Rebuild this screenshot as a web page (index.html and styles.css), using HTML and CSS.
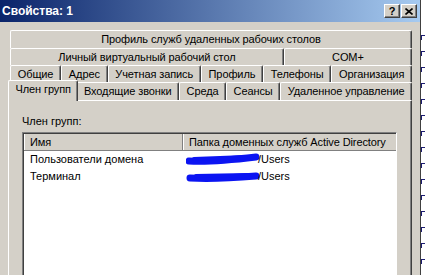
FILE: index.html
```html
<!DOCTYPE html>
<html lang="ru">
<head>
  <meta charset="UTF-8">
  <title>Свойства: 1</title>
  <link rel="stylesheet" href="styles.css">
</head>
<body>
<div class="window">
  <div class="titlebar">
    <span class="title">Свойства: 1</span>
    <div class="caption-buttons">
      <span class="cbtn help">?</span>
      <span class="cbtn close">
        <svg width="8" height="7" viewBox="0 0 8 7"><path d="M0.5 0.5 L7.5 6.5 M7.5 0.5 L0.5 6.5" stroke="#000" stroke-width="1.6"/></svg>
      </span>
    </div>
  </div>

  <div class="content">
    <div class="tabrow tall">
      <div class="tab">Профиль служб удаленных рабочих столов</div>
    </div>
    <div class="tabrow">
      <div class="tab">Личный виртуальный рабочий стол</div>
      <div class="tab wide">COM+</div>
    </div>
    <div class="tabrow">
      <div class="tab">Общие</div>
      <div class="tab">Адрес</div>
      <div class="tab">Учетная запись</div>
      <div class="tab">Профиль</div>
      <div class="tab">Телефоны</div>
      <div class="tab">Организация</div>
    </div>
    <div class="tabrow tall front">
      <div class="tab active">Член групп</div>
      <div class="tab">Входящие звонки</div>
      <div class="tab">Среда</div>
      <div class="tab">Сеансы</div>
      <div class="tab">Удаленное управление</div>
    </div>

    <div class="panel">
      <div class="label">Член групп:</div>
      <div class="listview">
        <div class="lv-head">
          <div class="col name">Имя</div>
          <div class="col folder">Папка доменных служб Active Directory</div>
        </div>
        <div class="lv-row">
          <div class="col name">Пользователи домена</div>
          <div class="col folder">
            <svg class="scribble" width="74" height="17" viewBox="0 0 74 17"><path d="M3 10 C20 11 45 9 70 6" stroke="#0b14f2" stroke-width="7" stroke-linecap="round" fill="none"/><path d="M8 8 L60 6" stroke="#0b14f2" stroke-width="4" stroke-linecap="round"/></svg>/Users
          </div>
        </div>
        <div class="lv-row">
          <div class="col name">Терминал</div>
          <div class="col folder">
            <svg class="scribble" width="74" height="17" viewBox="0 0 74 17"><path d="M4 10 C22 11 46 10 70 8" stroke="#0b14f2" stroke-width="7" stroke-linecap="round" fill="none"/><path d="M10 8 L62 7" stroke="#0b14f2" stroke-width="4" stroke-linecap="round"/></svg>/Users
          </div>
        </div>
      </div>
    </div>
  </div>
</div>

<div class="strip">
  <span class="mark"></span><span class="mark"></span><span class="mark"></span>
  <span class="mark"></span><span class="mark"></span><span class="mark"></span>
  <span class="mark"></span><span class="mark"></span><span class="mark"></span>
  <span class="mark"></span><span class="mark"></span><span class="mark"></span>
  <span class="mark"></span><span class="mark"></span><span class="mark"></span>
</div>
</body>
</html>
```

FILE: styles.css
```css
body {
  margin: 0;
  width: 425px;
  height: 275px;
  overflow: hidden;
  display: flex;
  font-family: "Liberation Sans", Arial, sans-serif;
  font-size: 11px;
  color: #000;
  background: #fff;
}

.window {
  width: 420px;
  height: 275px;
  background: #d4d0c8;
  border-right: 1px solid #404040;
  overflow: hidden;
  flex-shrink: 0;
}

/* Titelleiste */
.titlebar {
  height: 22px;
  display: flex;
  align-items: center;
  justify-content: space-between;
  background: linear-gradient(to right, #0a246a, #a6caf0);
}
.title {
  color: #fff;
  font-weight: bold;
  font-size: 12px;
  padding-left: 2px;
}
.caption-buttons {
  display: flex;
  gap: 1px;
  padding-right: 3px;
}
.cbtn {
  width: 14px;
  height: 12px;
  background: #d4d0c8;
  border: 1px solid;
  border-color: #fff #404040 #404040 #fff;
  box-shadow: inset -1px -1px 0 #808080;
  display: flex;
  align-items: center;
  justify-content: center;
  font-weight: bold;
  font-size: 11px;
  line-height: 12px;
}

/* Registerkarten */
.content {
  padding: 8px 8px 0 10px;
}
.tabrow {
  height: 17px;
  display: flex;
}
.tabrow.tall {
  height: 18px;
}
.tabrow.front {
  position: relative;
  z-index: 2;
}
.tab {
  flex: 1 1 auto;
  text-align: center;
  white-space: nowrap;
  line-height: 16px;
  letter-spacing: -0.1px;
  background: #d4d0c8;
  border-top: 1px solid #fff;
  border-left: 1px solid #fff;
  border-right: 1px solid #404040;
  box-shadow: inset -1px 0 0 #808080;
  border-radius: 2px 2px 0 0;
}
.tabrow.tall .tab {
  line-height: 17px;
}
.tab.active {
  position: relative;
  z-index: 3;
  margin: -2px -2px -1px -2px;
  padding-bottom: 3px;
  line-height: 16px;
}

.panel {
  margin-left: -2px;
  height: 190px;
  border-top: 1px solid #fff;
  border-left: 1px solid #fff;
  border-right: 1px solid #404040;
  box-shadow: inset -1px 0 0 #808080;
}
.label {
  margin: 13px 0 0 13px;
  line-height: 14px;
}

/* Listenansicht */
.listview {
  margin: 4px 0 0 13px;
  width: 372px;
  height: 160px;
  background: #fff;
  border: 1px solid;
  border-color: #808080 #fff #fff #808080;
  box-shadow: inset 1px 1px 0 #404040;
  padding: 1px 0 0 1px;
}
.lv-head {
  display: flex;
  height: 16px;
  background: #d4d0c8;
  border-bottom: 1px solid #808080;
}
.lv-head .col {
  line-height: 16px;
  letter-spacing: -0.1px;
  border-left: 1px solid #fff;
  border-right: 1px solid #808080;
}
.col.name {
  width: 152px;
  padding-left: 5px;
  white-space: nowrap;
}
.col.folder {
  padding-left: 5px;
  white-space: nowrap;
  flex: 1;
}
.lv-head .col.folder {
  border-right: none;
}
.lv-row {
  display: flex;
  height: 17px;
  line-height: 17px;
}
.lv-row .col.name {
  padding-left: 6px;
  width: 153px;
}
.lv-row .col.folder {
  padding-left: 3px;
  display: flex;
  align-items: center;
}
.scribble {
  display: block;
  margin-right: -2px;
}

/* Rand des Nachbarfensters */
.strip {
  flex: 1;
  padding-top: 35px;
  display: flex;
  flex-direction: column;
  background: #fff;
}
.mark {
  display: block;
  width: 3px;
  height: 6px;
  margin-bottom: 11px;
  border-top: 1px solid #1c1c70;
  border-left: 1px solid #1c1c70;
}
```
